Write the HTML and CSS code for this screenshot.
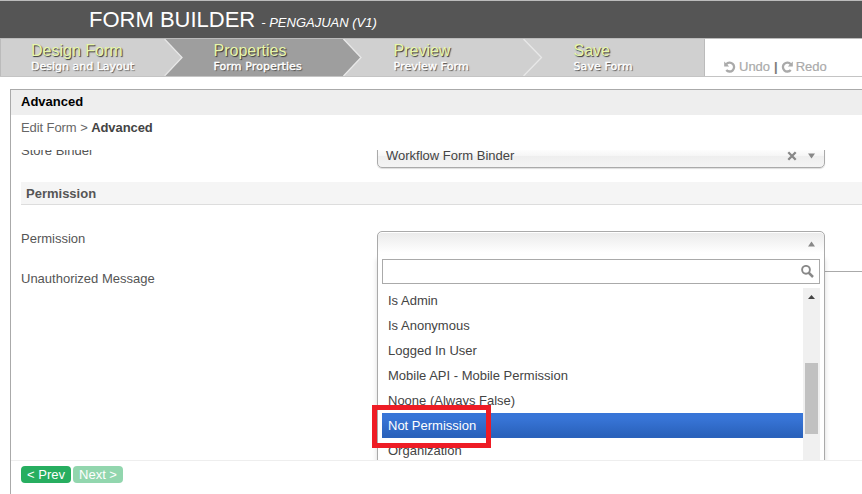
FILE: index.html
```html
<!DOCTYPE html>
<html lang="en">
<head>
<meta charset="utf-8">
<title>Form Builder</title>
<link rel="stylesheet" href="styles.css">
</head>
<body>
<header class="header"><span class="brand">FORM BUILDER</span><span class="app-name">- PENGAJUAN (V1)</span></header>
<nav class="toolbar">
  <div class="steps">
    <svg class="arrows" width="703" height="37" viewBox="0 0 703 37">
      <path d="M163 0H342L360 18.500L342 37H163L181 18.500Z" fill="#9e9e9e"/>
      <path d="M163.500 0L181 18.500L163.500 37M342.500 0L360 18.500L342.500 37M522.500 0L540.500 18.500L522.500 37" fill="none" stroke="#e8e8e8" stroke-width="1.300"/>
    </svg>
    <a class="step first"><span class="step-title">Design Form</span><span class="step-sub">Design and Layout</span></a>
    <a class="step"><span class="step-title">Properties</span><span class="step-sub wide">Form Properties</span></a>
    <a class="step"><span class="step-title">Preview</span><span class="step-sub wide">Preview Form</span></a>
    <a class="step last"><span class="step-title">Save</span><span class="step-sub wide">Save Form</span></a>
  </div>
  <div class="history">
    <svg class="hist-icon" viewBox="0 0 12 12"><path d="M2.300 3.300A4.400 4.400 0 1 1 2.300 8.900" fill="none" stroke="#aaa" stroke-width="2.300"/><path d="M.2.600V5.400H5.200Z" fill="#aaa"/></svg>
    <span class="undo">Undo</span><span class="bar">|</span>
    <svg class="hist-icon" viewBox="0 0 12 12"><path d="M9.700 3.300A4.400 4.400 0 1 0 9.700 8.900" fill="none" stroke="#aaa" stroke-width="2.300"/><path d="M11.800.600V5.400H6.800Z" fill="#aaa"/></svg>
    <span class="redo">Redo</span>
  </div>
</nav>
<main class="panel">
  <h1 class="panel-title">Advanced</h1>
  <div class="crumbs">Edit Form &gt; <b>Advanced</b></div>
  <div class="scroller">
    <div class="row binder-row">
      <label class="label">Store Binder</label>
      <div class="select binder"><span class="binder-name">Workflow Form Binder</span>
        <svg class="clear" width="10" height="10" viewBox="0 0 10 10"><path d="M1.300 1.300L8.700 8.700M8.700 1.300L1.300 8.700" stroke="#888" stroke-width="2.300"/></svg>
        <svg width="7" height="6" viewBox="0 0 7 6"><path d="M0 .500H7L3.500 5.500Z" fill="#888"/></svg>
      </div>
    </div>
    <h2 class="section">Permission</h2>
    <div class="row permission-row">
      <label class="label">Permission</label>
      <div class="select permission">
        <svg width="7" height="6" viewBox="0 0 7 6"><path d="M0 5.500H7L3.500 .500Z" fill="#888"/></svg>
        <div class="dropdown">
          <div class="search"><svg width="13" height="13" viewBox="0 0 13 13"><circle cx="5" cy="4.800" r="3.900" fill="none" stroke="#888" stroke-width="1.900"/><path d="M7.500 7.500L12 12" stroke="#888" stroke-width="2.500"/></svg></div>
          <div class="list">
            <ul class="options">
              <li>Is Admin</li><li>Is Anonymous</li><li>Logged In User</li><li>Mobile API - Mobile Permission</li><li>Noone (Always False)</li><li class="active">Not Permission</li><li>Organization</li>
            </ul>
            <div class="track"><svg width="7" height="4" viewBox="0 0 7 4"><path d="M0 4H7L3.500 0Z" fill="#444"/></svg><div class="thumb"></div></div>
          </div>
        </div>
      </div>
    </div>
    <div class="row message-row"><label class="label">Unauthorized Message</label><div class="textarea"></div></div>
    <div class="callout"></div>
  </div>
  <footer class="footer"><a class="button">&lt; Prev</a><a class="button disabled">Next &gt;</a></footer>
</main>
</body>
</html>
```
FILE: styles.css
```css
* { box-sizing: border-box; }
body { margin: 0; width: 862px; height: 494px; overflow: hidden; background: #fff; color: #555; font: 13px/16px "Liberation Sans", Arial, sans-serif; }
.header { height: 39px; padding: 5px 0 0 89px; background: #555; border-top: 1px solid #bbb; border-bottom: 1px solid #bbb; color: #fff; line-height: 27px; white-space: nowrap; }
.brand { font-size: 22px; }
.app-name { margin-left: 6px; font-size: 13px; font-style: italic; }
.toolbar { display: flex; height: 38px; border-bottom: 1px solid #c4c4c4; }
.steps { position: relative; display: flex; flex: none; width: 705px; height: 37px; padding-left: 30px; background: #d0d0d0; border-left: 1px solid #bbb; border-right: 1px solid #bbb; }
.arrows { position: absolute; left: 0; top: 0; }
.step { position: relative; flex: none; width: 180px; padding-top: 3px; white-space: nowrap; }
.first { width: 182.500px; }
.last { width: 130px; }
.step-title, .step-sub { display: block; }
.step-title { height: 17px; color: #e8f6aa; font-size: 16px; line-height: 17px; text-shadow: 1px 1px 1px #333; }
.step-sub { color: #fff; font: 11px/15px "DejaVu Sans", Verdana, sans-serif; -webkit-text-stroke: .4px #fff; text-shadow: 1px 1px 1px #444; }
.wide { letter-spacing: .1px; }
.history { display: flex; align-items: center; padding: 18px 0 0 19px; color: #aaa; -webkit-text-stroke: .2px #aaa; }
.hist-icon { width: 12px; height: 12px; }
.undo { margin-left: 3px; }
.bar { margin: 0 3px 0 4px; color: #777; font-weight: bold; }
.redo { margin-left: 3px; }
.panel { height: 405px; margin: 12px 0 0 10px; border: solid #aaa; border-width: 1px 0 0 1px; }
.panel-title { height: 25px; margin: 0; padding: 4px 0 0 10px; background: #eee; color: #000; font-size: 13px; line-height: 16px; }
.crumbs { height: 35px; padding: 5px 10px; color: #666; letter-spacing: -.08px; }
.crumbs b { color: #444; }
.scroller { position: relative; height: 310px; overflow: hidden; padding-left: 10px; }
.row { display: flex; }
.label { width: 356px; flex: none; }
.binder-row { height: 32px; margin-top: -7px; }
.select { position: relative; display: flex; flex: none; width: 448px; border: 1px solid #aaa; border-radius: 5px; }
.binder { height: 25px; align-items: center; padding: 1px 9px 0 8px; background: linear-gradient(#fff 20%, #f6f6f6 50%, #eee 52%, #f4f4f4); box-shadow: 0 1px 1px #ddd; color: #444; }
.clear { margin: 0 11px 0 auto; }
.section { height: 23px; margin: 7px 0 26px; padding: 4px 5px 0; background: #f5f5f5; border-bottom: 1px solid #ddd; font-size: 13px; line-height: 16px; }
.permission-row { height: 40px; }
.permission { height: 230px; justify-content: flex-end; padding: 9px 9px 0 0; background: linear-gradient(#eaeaea, #fff 21px); box-shadow: inset 0 1px #fff; }
.dropdown { position: absolute; z-index: 2; top: 23px; left: -1px; width: 448px; height: 240px; padding: 4px; border: solid #aaa; border-width: 0 1px; background: #fff; box-shadow: 0 4px 5px rgba(0,0,0,.15); }
.search { display: flex; justify-content: flex-end; height: 25px; padding: 5px 5px; border: 1px solid #aaa; }
.list { display: flex; margin-top: 4px; height: 180px; }
.options { width: 421px; margin: 0; padding: 0; list-style: none; color: #444; }
.options li { height: 25px; padding: 5px 6px; line-height: 15px; }
.options .active { color: #fff; background: linear-gradient(#3875d7 20%, #2a62bc 90%); }
.track { width: 17px; padding: 7px 2px 0; background: #f0f0f0; line-height: 4px; }
.track svg { display: block; margin-left: 3px; }
.thumb { width: 13px; height: 71px; margin-top: 64px; background: #c1c1c1; }
.message-row .textarea { flex: none; width: 600px; height: 240px; border: 1px solid #aaa; }
.callout { position: absolute; z-index: 3; top: 255px; left: 361px; width: 119px; height: 43px; border: 5px solid #ee1c25; }
.footer { display: flex; gap: 2px; padding: 5px 10px; border-top: 1px solid #eee; }
.button { width: 50px; height: 17px; border-radius: 4px; background: #27ae60; color: #fff; text-align: center; line-height: 17px; }
.disabled { opacity: .5; }
```
